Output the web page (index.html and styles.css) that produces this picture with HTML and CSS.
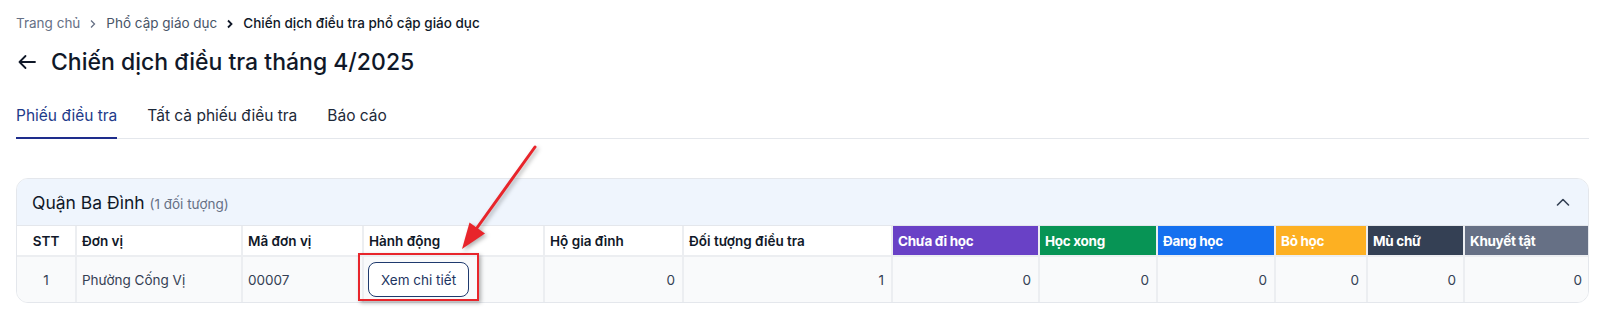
FILE: index.html
```html
<!DOCTYPE html>
<html lang="vi">
<head>
  <meta charset="UTF-8" />
  <meta name="viewport" content="width=device-width, initial-scale=1.0"/>
  <title>Chiến dịch điều tra tháng 4/2025</title>
  <link rel="stylesheet" href="styles.css">
</head>
<body>
  <div class="page">
    <!-- Breadcrumb -->
    <nav class="breadcrumb">
      <span class="crumb">Trang chủ</span>
      <svg class="sep" width="8" height="10" viewBox="0 0 8 10"><path d="M2 1.5 L5.5 5 L2 8.5" /></svg>
      <span class="crumb mid">Phổ cập giáo dục</span>
      <svg class="sep dark" width="8" height="10" viewBox="0 0 8 10"><path d="M2 1.5 L5.5 5 L2 8.5" /></svg>
      <span class="crumb current">Chiến dịch điều tra phổ cập giáo dục</span>
    </nav>

    <!-- Title -->
    <h1 class="title">
      <svg class="back" width="20" height="20" viewBox="0 0 20 20"><path d="M18 10 H2.5 M8.5 4 L2.5 10 L8.5 16" /></svg>
      Chiến dịch điều tra tháng 4/2025
    </h1>

    <!-- Tabs -->
    <div class="tabs">
      <div class="tab active">Phiếu điều tra</div>
      <div class="tab">Tất cả phiếu điều tra</div>
      <div class="tab">Báo cáo</div>
    </div>

    <!-- District card -->
    <div class="card">
      <div class="card-head">
        <div class="card-title">Quận Ba Đình <span class="count">(1 đối tượng)</span></div>
        <svg class="chevron" width="14" height="8" viewBox="0 0 14 8"><path d="M1.5 7 L7 1.5 L12.5 7" /></svg>
      </div>
      <table class="grid">
        <colgroup>
          <col style="width:59px"><col style="width:166px"><col style="width:121px"><col style="width:181px">
          <col style="width:139px"><col style="width:209px"><col style="width:147px"><col style="width:118px">
          <col style="width:118px"><col style="width:92px"><col style="width:97px"><col style="width:125px">
        </colgroup>
        <thead>
          <tr>
            <th class="center">STT</th>
            <th>Đơn vị</th>
            <th>Mã đơn vị</th>
            <th>Hành động</th>
            <th>Hộ gia đình</th>
            <th>Đối tượng điều tra</th>
            <th class="c-purple">Chưa đi học</th>
            <th class="c-green">Học xong</th>
            <th class="c-blue">Đang học</th>
            <th class="c-orange">Bỏ học</th>
            <th class="c-dark">Mù chữ</th>
            <th class="c-gray">Khuyết tật</th>
          </tr>
        </thead>
        <tbody>
          <tr>
            <td class="center">1</td>
            <td>Phường Cống Vị</td>
            <td>00007</td>
            <td class="action"><button class="btn-outline">Xem chi tiết</button></td>
            <td class="num">0</td>
            <td class="num">1</td>
            <td class="num">0</td>
            <td class="num">0</td>
            <td class="num">0</td>
            <td class="num">0</td>
            <td class="num">0</td>
            <td class="num">0</td>
          </tr>
        </tbody>
      </table>
    </div>

    <!-- Annotation overlay -->
    <div class="mark-box"></div>
    <svg class="mark-arrow" width="1600" height="329" viewBox="0 0 1600 329">
      <line x1="535" y1="147" x2="474" y2="232" />
      <polygon points="462,249 469.5,222.5 485,233.5" />
    </svg>
  </div>
</body>
</html>
```

FILE: styles.css
```css
* {
  box-sizing: border-box;
}

body {
  margin: 0;
  font-family: Inter, "Noto Sans", sans-serif;
  color: #101828;
  background: #fff;
}

.page {
  position: relative;
  padding: 14px 11px 0 16px;
  height: 329px;
}

/* breadcrumb */
.breadcrumb {
  display: flex;
  align-items: center;
  font-size: 13.5px;
  line-height: 19px;
}

.crumb {
  color: #667085;
}

.crumb.mid {
  color: #475467;
}

.crumb.current {
  color: #101828;
  font-weight: 500;
}

.sep {
  margin: 0 9px;
  fill: none;
  stroke: #667085;
  stroke-width: 1.3;
}

.sep.dark {
  stroke: #101828;
  stroke-width: 1.8;
}

/* title */
.title {
  display: flex;
  align-items: center;
  gap: 14px;
  margin: 13px 0 0;
  font-size: 23px;
  line-height: 32px;
  font-weight: 500;
  color: #101828;
}

.back {
  margin-left: 1px;
  fill: none;
  stroke: #101828;
  stroke-width: 1.8;
  stroke-linecap: round;
  stroke-linejoin: round;
}

/* tabs */
.tabs {
  display: flex;
  gap: 30px;
  margin-top: 27px;
  border-bottom: 1px solid #e4e7ec;
}

.tab {
  font-size: 15.5px;
  line-height: 22px;
  padding-bottom: 10px;
  color: #1d2939;
}

.tab.active {
  color: #1e3a8a;
  border-bottom: 2px solid #1e2d8c;
  margin-bottom: -1px;
}

/* card */
.card {
  margin-top: 39px;
  border: 1px solid #e4e7ec;
  border-radius: 12px;
  overflow: hidden;
}

.card-head {
  display: flex;
  align-items: center;
  justify-content: space-between;
  height: 47px;
  padding: 0 18px 0 15px;
  background: #eff5fd;
  border-bottom: 1px solid #e4e7ec;
}

.card-title {
  font-size: 17.5px;
  color: #101828;
}

.count {
  font-size: 13.5px;
  color: #667085;
}

.chevron {
  fill: none;
  stroke: #344054;
  stroke-width: 1.6;
  stroke-linecap: round;
  stroke-linejoin: round;
}

/* table */
.grid {
  width: 100%;
  border-collapse: collapse;
  table-layout: fixed;
  font-size: 13.5px;
}

.grid th,
.grid td {
  border: 2px solid #eceef1;
  padding: 0 5px;
  text-align: left;
  white-space: nowrap;
}

.grid th:first-child,
.grid td:first-child {
  border-left: 0;
}

.grid th:last-child,
.grid td:last-child {
  border-right: 0;
}

.grid th {
  border-top: 0;
  height: 30px;
  font-weight: 600;
  color: #101828;
  background: #fff;
}

.grid td {
  border-bottom: 0;
  height: 46px;
  color: #344054;
  background: #f9fafb;
}

.grid .center {
  text-align: center;
}

.grid .num {
  text-align: right;
  padding-right: 7px;
}

.grid td.action {
  padding-left: 4px;
}

.grid th.c-purple,
.grid th.c-green,
.grid th.c-blue,
.grid th.c-orange,
.grid th.c-dark,
.grid th.c-gray {
  color: #fff;
  font-weight: 700;
  letter-spacing: -0.3px;
}

.grid th.c-purple { background: #6941c6; }
.grid th.c-green { background: #079455; }
.grid th.c-blue { background: #1570ef; }
.grid th.c-orange { background: #fdb022; }
.grid th.c-dark { background: #344054; }
.grid th.c-gray { background: #667085; }

.btn-outline {
  height: 35px;
  padding: 0 12px;
  border: 1px solid #1f3a6e;
  border-radius: 8px;
  background: #fff;
  color: #1d3461;
  font-family: inherit;
  font-size: 13.5px;
  cursor: pointer;
}

/* annotation */
.mark-box {
  position: absolute;
  left: 358px;
  top: 253px;
  width: 121px;
  height: 48px;
  border: 2px solid #e8252b;
  box-shadow: 2px 2px 4px rgba(0, 0, 0, 0.3);
}

.mark-arrow {
  position: absolute;
  left: 0;
  top: 0;
  pointer-events: none;
  filter: drop-shadow(2px 2px 2px rgba(0, 0, 0, 0.3));
}

.mark-arrow line {
  stroke: #e8252b;
  stroke-width: 3;
  stroke-linecap: round;
}

.mark-arrow polygon {
  fill: #e8252b;
}
```
